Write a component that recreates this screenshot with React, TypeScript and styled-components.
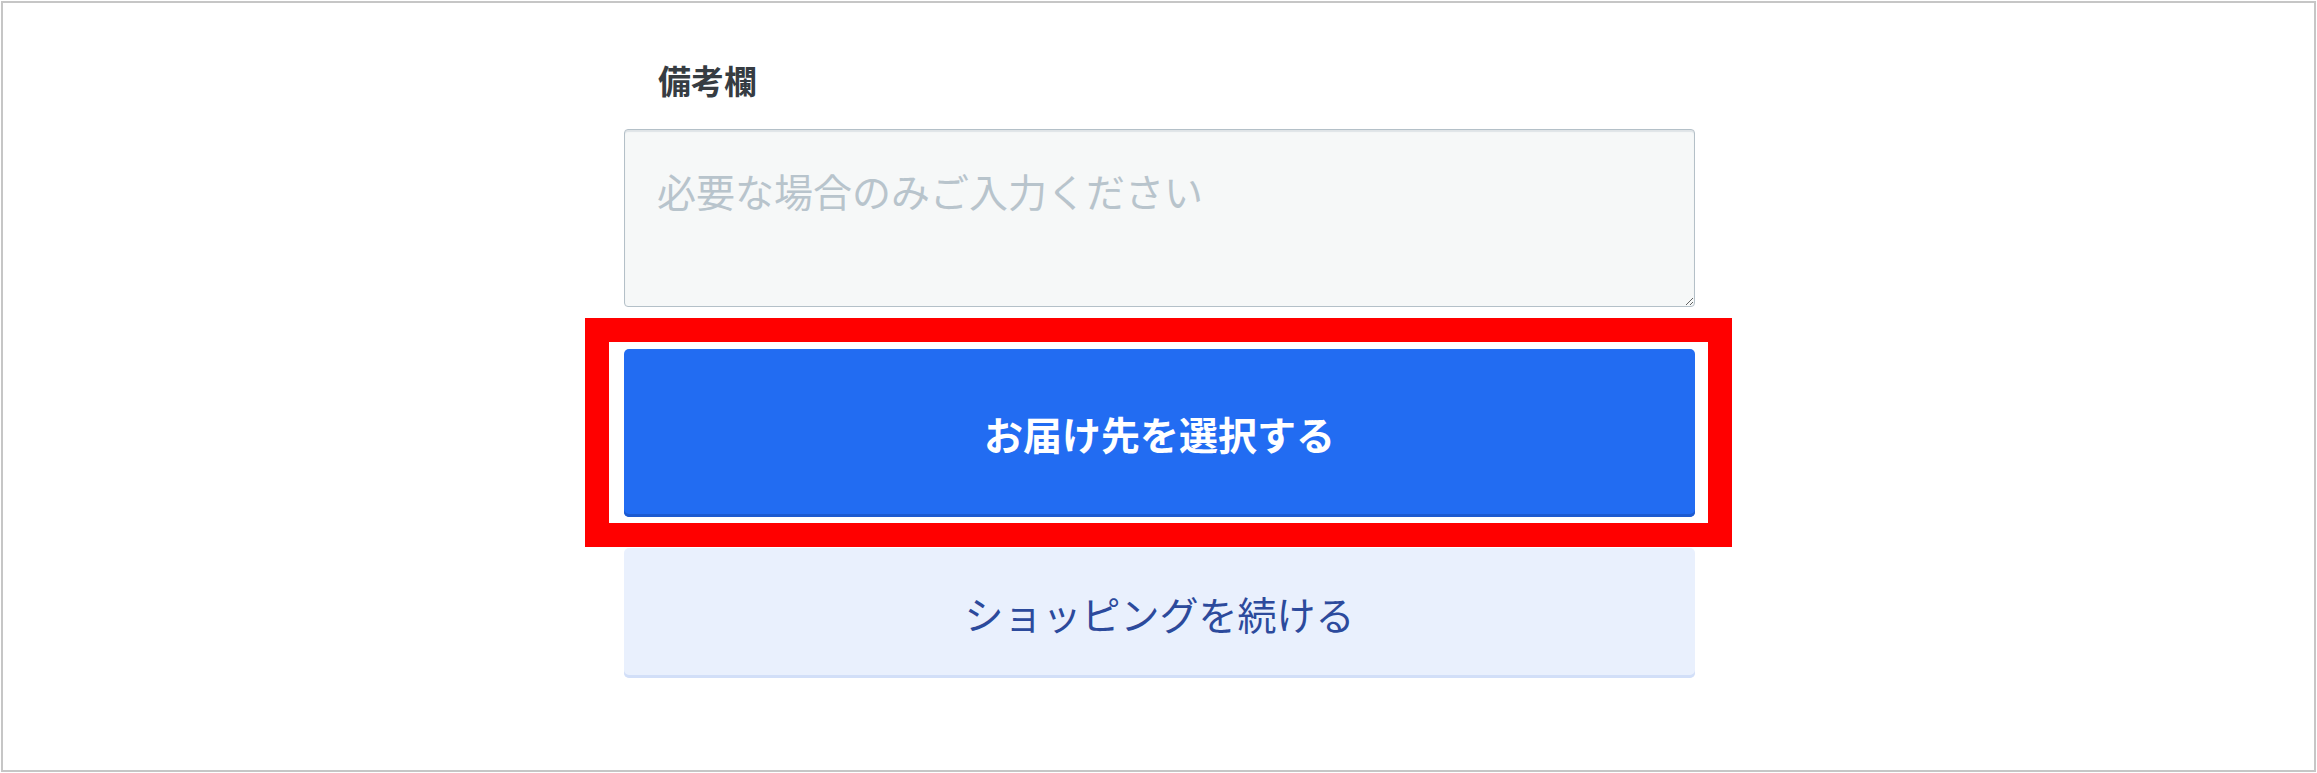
import styled, {createGlobalStyle} from 'styled-components'

const GlobalStyle = createGlobalStyle`
    html,
    body {
        margin: 0;
        padding: 0;
        background: #ffffff;
    }

    body {
        font-family: "Noto Sans CJK JP", "Noto Sans", sans-serif;
    }
`

const Frame = styled.div`
    box-sizing: border-box;
    margin: 1px;
    height: 771px;
    border: 2px solid #c6c6c6;
    padding-top: 54px;
`

const Column = styled.div`
    width: 1071px;
    margin-left: 621px;
    display: flex;
    flex-direction: column;
`

const Label = styled.label`
    display: block;
    padding-left: 34px;
    font-size: 33px;
    line-height: 46px;
    font-weight: 700;
    color: #363c42;
`

const Notes = styled.textarea`
    box-sizing: border-box;
    display: block;
    width: 1071px;
    height: 178px;
    margin-top: 26px;
    padding: 31px 32px;
    border: 1px solid #b4c0c8;
    border-radius: 4px;
    background: #f6f8f8;
    box-shadow: inset 0 2px 1px rgba(120, 140, 155, 0.18);
    font-family: inherit;
    font-size: 39px;
    line-height: 1.5;
    color: #3a4046;
    resize: vertical;

    &::placeholder {
        color: #b8c4cc;
    }
`

const Highlighted = styled.div`
    position: relative;
    margin-top: 42px;
`

const Marker = styled.div`
    position: absolute;
    top: -31px;
    left: -39px;
    right: -37px;
    bottom: -30px;
    border: 24px solid #ff0000;
    pointer-events: none;
`

const Button = styled.button<{ $variant: 'primary' | 'secondary' }>`
    box-sizing: border-box;
    display: flex;
    align-items: center;
    justify-content: center;
    width: 100%;
    height: ${({$variant}) => ($variant === 'primary' ? '168px' : '130px')};
    border: none;
    border-radius: 5px;
    font-family: inherit;
    font-size: 39px;
    cursor: pointer;
    background: ${({$variant}) => ($variant === 'primary' ? '#226cf2' : '#e9f0fd')};
    color: ${({$variant}) => ($variant === 'primary' ? '#ffffff' : '#2c4a9c')};
    font-weight: ${({$variant}) => ($variant === 'primary' ? 700 : 400)};
    box-shadow: ${({$variant}) =>
            $variant === 'primary' ? 'inset 0 -3px 0 #1c5ad0' : 'inset 0 -3px 0 #d2dff8'};
`

const SecondaryRow = styled.div`
    margin-top: 31px;
`

export default function App() {
    return (
        <>
            <GlobalStyle/>
            <Frame>
                <Column>
                    <Label htmlFor="notes">備考欄</Label>
                    <Notes id="notes" placeholder="必要な場合のみご入力ください"/>
                    <Highlighted>
                        <Button $variant="primary">お届け先を選択する</Button>
                        <Marker/>
                    </Highlighted>
                    <SecondaryRow>
                        <Button $variant="secondary">ショッピングを続ける</Button>
                    </SecondaryRow>
                </Column>
            </Frame>
        </>
    )
}
